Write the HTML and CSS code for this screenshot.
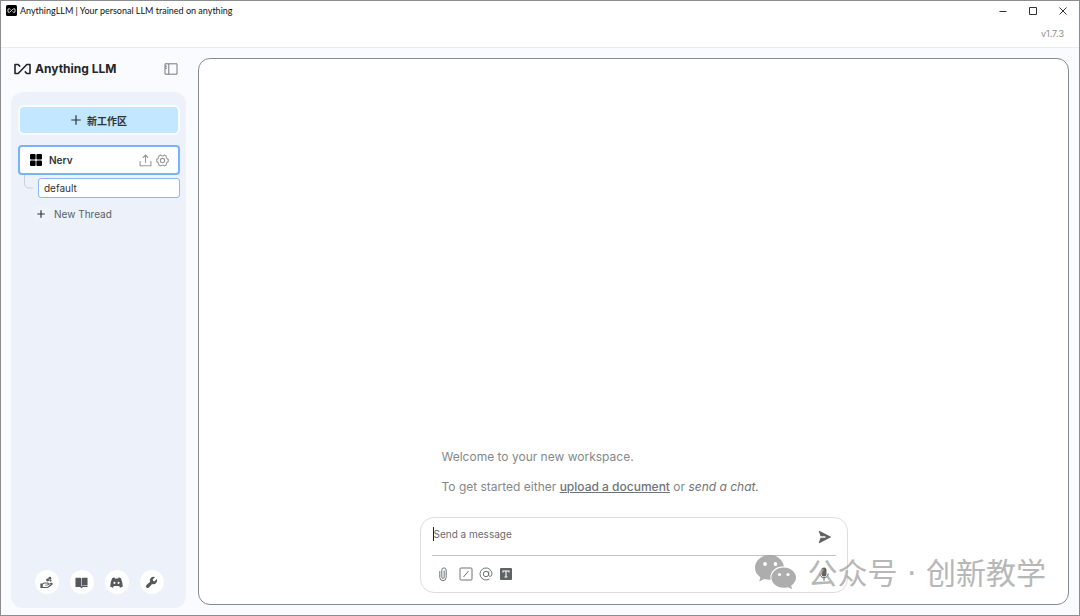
FILE: index.html
```html
<!DOCTYPE html>
<html lang="zh-CN">
<head>
    <meta charset="UTF-8">
    <meta name="viewport" content="width=device-width, initial-scale=1">
    <title>AnythingLLM | Your personal LLM trained on anything</title>
    <link rel="stylesheet" href="styles.css">
</head>
<body>
    <div class="window">
        <header class="titlebar">
            <svg class="app-icon" viewBox="0 0 11 11">
                <rect width="11" height="11" rx="1.5" fill="#000"/>
                <path d="M4.6 4.6 3.8 3.900H2v3.300h1.700l3.500-3.300H9v3.300H7.200l-.8-.7" fill="none" stroke="#fff" stroke-width=".8"/>
            </svg>
            <span class="window-title">AnythingLLM | Your personal LLM trained on anything</span>
            <div class="window-controls">
                <button aria-label="Minimize"><svg viewBox="0 0 8 8"><path d="M.5 4.5h7"/></svg></button>
                <button aria-label="Maximize"><svg viewBox="0 0 8 8"><path d="M.5.5h7v7h-7z"/></svg></button>
                <button aria-label="Close"><svg viewBox="0 0 8 8"><path d="m.5.5 7 7M7.5.5l-7 7"/></svg></button>
            </div>
        </header>
        <div class="version">v1.7.3</div>

        <div class="layout">
            <aside class="sidebar">
                <div class="brand">
                    <svg class="brand-mark" viewBox="0 0 17 12">
                        <path d="M6.200 3.600 4.200 1.500H1v9h3.200l8.600-9H16v9h-3.200l-2-2.100" fill="none" stroke="#222628" stroke-width="1.600" stroke-linejoin="round"/>
                    </svg>
                    <span class="brand-name">Anything LLM</span>
                    <button class="icon-button toggle" aria-label="Toggle sidebar">
                        <svg viewBox="0 0 14 12"><path d="M1 .8h12v10.400H1zM4.800.8v10.400M1 3.200h2M1 5.200h2" fill="none" stroke="#74797e"/></svg>
                    </button>
                </div>

                <div class="panel">
                    <button class="new-workspace">
                        <svg viewBox="0 0 10 10"><path d="M5 .3v9.400M.3 5h9.400" stroke="#26343d" stroke-width="1.200"/></svg>
                        新工作区
                    </button>

                    <div class="workspace">
                        <svg class="grid-icon" viewBox="0 0 12 12"><rect width="5.600" height="5.600" rx="1"/><rect x="6.400" width="5.600" height="5.600" rx="1"/><rect y="6.400" width="5.600" height="5.600" rx="1"/><rect x="6.400" y="6.400" width="5.600" height="5.600" rx="1"/></svg>
                        <span class="workspace-name">Nerv</span>
                        <button class="icon-button" aria-label="Upload">
                            <svg class="line-icon" viewBox="0 0 12 12"><path d="M1 6.500v4.300h10V6.500M6 8V1.200M3.500 3.500 6 1l2.500 2.500"/></svg>
                        </button>
                        <button class="icon-button" aria-label="Settings">
                            <svg class="line-icon" viewBox="0 0 12 12"><circle cx="6" cy="6" r="2"/><path d="m4.200 1 1 .6h1.600l1-.6 1.600.9.1 1.200.8 1.300 1 .6v2l-1 .6-.8 1.300-.1 1.200-1.600.9-1-.6H5.200l-1 .6-1.600-.9-.1-1.200-.8-1.300-1-.6V5l1-.6.8-1.300.1-1.200z"/></svg>
                        </button>
                    </div>

                    <div class="thread">
                        <svg class="branch" viewBox="0 0 9 14"><path d="M.5 0v8q0 5 5 5H9" fill="none" stroke="#cbd0d6"/></svg>
                        <a class="thread-link" href="#default">default</a>
                    </div>
                    <button class="new-thread">
                        <span class="plus-box"><svg viewBox="0 0 8 8"><path d="M4 .3v7.400M.3 4h7.400" stroke="#33383b" stroke-width="1.200"/></svg></span>
                        New Thread
                    </button>

                    <nav class="footer-links">
                        <a href="#support" aria-label="Support">
                            <svg viewBox="0 0 14 14"><path fill-rule="evenodd" d="M.4 8.200h2.200l1.700-1.300h3.500c1.300 0 1.900.8 1.700 1.500l2.600-1.100c1.300-.4 2.200 1.100 1.100 2l-3.900 3c-.6.400-1 .5-1.600.5H.4zM3 9.200v2.600h4.800l4.600-3.400-3.600 1.400q-.4.400-1 .4H5.600v-.9h2q.8 0 .8-.7T7.600 8H4.700z"/><circle cx="8.200" cy="4.400" r="1.600"/><circle cx="10.600" cy="2.300" r="1.500"/><circle cx="11.300" cy="4.900" r="1.200"/></svg>
                        </a>
                        <a href="#docs" aria-label="Docs">
                            <svg viewBox="0 0 14 14"><path d="M.5 1.800h4.800q1 0 1.400.8v8.500q-.4-.6-1.400-.6H.5zM13.500 1.800H8.700q-1 0-1.400.8v8.500q.4-.6 1.400-.6h4.800zM.5 10h5l1.500 1.300L8.500 10h5v1.800H8.600L7 13.300l-1.600-1.500H.5z"/></svg>
                        </a>
                        <a href="#discord" aria-label="Discord">
                            <svg viewBox="0 0 14 14"><path fill-rule="evenodd" d="M4.600 1.400 2.300 2.300Q.3 6.500.2 11.200l3 1.500 1-1.800h5.600l1 1.800 3-1.500q-.1-4.700-2.100-8.900l-2.300-.9-.7 1.200H5.300zM4.800 6.300a1.100 1.100 0 1 0 .1 2.200 1.100 1.100 0 0 0-.1-2.200m4.400 0a1.100 1.100 0 1 0 .1 2.200 1.100 1.100 0 0 0-.1-2.200"/></svg>
                        </a>
                        <a href="#settings" aria-label="Settings">
                            <svg viewBox="0 0 14 14"><path d="M12.700 3.200 10.400 5.600 8.700 5.300 8.400 3.600 10.800 1.300A3.900 3.900 0 0 0 5.500 6.300L1.600 9.800a1.800 1.800 0 0 0 2.600 2.600l3.500-3.900a3.900 3.900 0 0 0 5-5.300"/></svg>
                        </a>
                    </nav>
                </div>
            </aside>

            <main class="chat">
                <div class="welcome">
                    <p>Welcome to your new workspace.</p>
                    <p>To get started either <a href="#upload">upload a document</a> or <em>send a chat.</em></p>
                </div>
                <form class="composer">
                    <div class="message-row">
                        <input class="message" type="text" placeholder="Send a message" aria-label="Send a message">
                        <button class="icon-button send" aria-label="Send">
                            <svg viewBox="0 0 14 14"><path d="M1.300.8 13.400 7 1.300 13.200q-.6-.1-.4-.8l1.600-4.700H7.500V6.300h-5L.9 1.600q-.1-.7.4-.8" fill="#606264"/></svg>
                        </button>
                    </div>
                    <div class="tools">
                        <button type="button" class="icon-button attach" aria-label="Attach a file"><svg class="tool-icon" viewBox="0 0 14 14"><path d="M8.200 3.500v6.700a1.200 1.200 0 0 1-2.400 0V3.100a2.200 2.200 0 0 1 4.400 0v7.300a3.200 3.200 0 0 1-6.400 0V4"/></svg></button>
                        <button type="button" class="icon-button" aria-label="Slash commands"><svg class="tool-icon" viewBox="0 0 14 14"><rect x="1" y="1" width="12" height="12" rx="1"/><path d="m4.500 10 5-6"/></svg></button>
                        <button type="button" class="icon-button" aria-label="Agents"><svg class="tool-icon" viewBox="0 0 14 14"><circle cx="7" cy="7" r="2.700"/><path d="M9.700 4.300v3.500c0 2.600 3.300 2 3.300-1A6 6 0 1 0 10.300 12"/></svg></button>
                        <button type="button" class="icon-button" aria-label="Text size"><svg viewBox="0 0 14 14"><rect x="1" y="1" width="12" height="12" rx="1" fill="#606264"/><path d="M4 5.500V4h6v1.500M7 4v6M5.500 10h3" fill="none" stroke="#fff" stroke-width="1.100"/></svg></button>
                        <button type="button" class="icon-button mic" aria-label="Microphone"><svg viewBox="0 0 14 14"><rect x="4.500" y=".5" width="5" height="9" rx="2.500" fill="#606264"/><path d="M2.800 6.500a4.200 4.200 0 0 0 8.400 0M7 10.800v3" fill="none" stroke="#606264"/></svg></button>
                    </div>
                </form>
            </main>
        </div>
    </div>

    <div class="watermark">
        <svg viewBox="0 0 42 34">
            <path d="M15 0C6.500 0 0 5.600 0 12.700c0 4 2 7.200 5.400 9.500L4.300 26.500l5-2.600c2 .6 4 .9 6.400.8C14 17 20.500 11 29 11.200 27.600 4.800 22 0 15 0"/>
            <path d="M28.700 12.500c-7 0-12.300 4.500-12.300 10.100s5.400 10.200 12.300 10.200c1.500 0 3-.2 4.300-.6l4.200 2-1.100-3.500c3.100-1.900 4.900-4.800 4.900-8.100 0-5.600-5.400-10.100-12.300-10.100"/>
            <g fill="#fff"><circle cx="10" cy="9" r="1.900"/><circle cx="20.500" cy="9" r="1.900"/><circle cx="24.500" cy="19.500" r="1.600"/><circle cx="33" cy="19.500" r="1.600"/></g>
        </svg>
        <span>公众号 · 创新教学</span>
    </div>
</body>
</html>
```

FILE: styles.css
```css
* {
    box-sizing: border-box;
}

body {
    margin: 0;
    font-family: Inter, "Noto Sans CJK SC", sans-serif;
    font-size: 10px;
    color: #303538;
}

button,
input {
    font: inherit;
    color: inherit;
    border: none;
    background: none;
    padding: 0;
}

button {
    cursor: pointer;
}

svg {
    display: block;
    flex: none;
}

.window {
    min-height: 100vh;
    display: flex;
    flex-direction: column;
    border: 1px solid #8b8d8f;
    background: #fafbfe;
}

.titlebar {
    display: flex;
    align-items: center;
    gap: 3px;
    height: 19px;
    padding: 0 12px 0 5px;
    background: #fff;
}

.app-icon {
    width: 11px;
    height: 11px;
}

.window-title {
    font-family: Lato, sans-serif;
    font-size: 9px;
    color: #111;
}

.window-controls {
    display: flex;
    gap: 22px;
    margin-left: auto;
}

.window-controls svg {
    width: 8px;
    height: 8px;
    fill: none;
    stroke: #333;
}

.version {
    height: 28px;
    padding: 8px 15px 0 0;
    border-bottom: 1px solid #ececee;
    background: #fff;
    font-size: 9px;
    line-height: 12px;
    text-align: right;
    color: #8b8e91;
}

.layout {
    flex: 1;
    display: flex;
    gap: 12px;
    padding: 10px 10px 7px;
}

.sidebar {
    width: 175px;
    flex: none;
    display: flex;
    flex-direction: column;
}

.brand {
    display: flex;
    align-items: center;
    gap: 4px;
    height: 34px;
    padding: 0 8px 13px 3px;
}

.brand-mark {
    width: 17px;
    height: 12px;
}

.brand-name {
    font-size: 12px;
    font-weight: 700;
    color: #222628;
}

.icon-button svg {
    width: 14px;
    height: 14px;
}

.toggle {
    margin-left: auto;
}

.panel {
    flex: 1;
    display: flex;
    flex-direction: column;
    padding: 13px 6px 14px 7px;
    border-radius: 12px;
    background: #ecf1fa;
}

.new-workspace {
    display: flex;
    align-items: center;
    justify-content: center;
    gap: 6px;
    height: 30px;
    border: 2px solid #f8fbff;
    border-radius: 6px;
    background: #c2e7fe;
    font-weight: 600;
}

.new-workspace svg {
    width: 10px;
    height: 10px;
}

.workspace {
    display: flex;
    align-items: center;
    gap: 4px;
    height: 30px;
    margin-top: 10px;
    padding: 0 9px 0 10px;
    border: 2px solid #77b3fb;
    border-radius: 4px;
    background: #fff;
}

.grid-icon {
    width: 12px;
    height: 12px;
}

.workspace-name {
    flex: 1;
    padding-left: 3px;
    font-weight: 600;
}

.line-icon {
    fill: none;
    stroke: #96999c;
}

.workspace .line-icon {
    width: 13px;
    height: 13px;
}

.thread {
    display: flex;
    gap: 5px;
    margin-top: 3px;
    padding-left: 6px;
}

.branch {
    width: 9px;
    height: 14px;
    margin-top: -3px;
}

.thread-link {
    flex: 1;
    height: 20px;
    padding-left: 5px;
    border: 1px solid #85b9f8;
    border-radius: 3px;
    background: #fff;
    line-height: 19px;
    color: #303538;
    text-decoration: none;
}

.new-thread {
    display: flex;
    align-items: center;
    gap: 5px;
    margin-top: 8px;
    padding-left: 15px;
    color: #5b6064;
}

.plus-box {
    padding: 4px;
    border-radius: 4px;
    background: #eff3fb;
}

.plus-box svg {
    width: 8px;
    height: 8px;
}

.footer-links {
    display: flex;
    justify-content: center;
    gap: 11px;
    margin-top: auto;
}

.footer-links a {
    display: grid;
    place-items: center;
    width: 24px;
    height: 24px;
    border-radius: 50%;
    background: #fff;
}

.footer-links svg {
    width: 13px;
    height: 13px;
    fill: #56595b;
}

.chat {
    flex: 1;
    display: flex;
    flex-direction: column;
    align-items: center;
    justify-content: flex-end;
    margin-bottom: 3px;
    padding: 11px;
    border: 1px solid #858b90;
    border-radius: 12px;
    background: #fff;
}

.welcome {
    width: 100%;
    max-width: 428px;
    padding: 0 22px 20px;
    font-size: 12px;
    line-height: 20px;
    color: #858889;
}

.welcome p {
    margin: 0 0 10px;
}

.welcome p:last-child {
    margin-bottom: 0;
}

.welcome a {
    color: #707476;
    font-weight: 500;
}

.welcome em {
    color: #707476;
}

.composer {
    width: 100%;
    max-width: 428px;
    padding: 0 11px;
    border: 1px solid #dcdddf;
    border-radius: 14px;
}

.message-row {
    display: flex;
    align-items: center;
    height: 38px;
    padding-right: 4px;
    border-bottom: 1px solid #bfc1c2;
}

.message {
    flex: 1;
    height: 14px;
    margin: 0 0 6px 1px;
    border-left: 1px solid #222;
    outline: none;
}

.message::placeholder {
    color: #686c6f;
    opacity: 1;
}

.tools {
    display: flex;
    align-items: center;
    gap: 6px;
    height: 36px;
    padding: 0 5px 0 4px;
}

.tool-icon {
    fill: none;
    stroke: #707376;
}

.attach {
    margin-right: 3px;
}

.mic {
    margin-left: auto;
}

.watermark {
    position: absolute;
    right: 34px;
    bottom: 22px;
    display: flex;
    align-items: center;
    gap: 10px;
    font-family: "DejaVu Sans", "Noto Sans CJK SC", sans-serif;
    font-size: 30px;
    font-weight: 400;
    line-height: 40px;
    color: #a6a6a6;
    opacity: 0.8;
    pointer-events: none;
}

.watermark svg {
    width: 42px;
    height: 34px;
    margin-bottom: 4px;
    fill: #999;
}
```
